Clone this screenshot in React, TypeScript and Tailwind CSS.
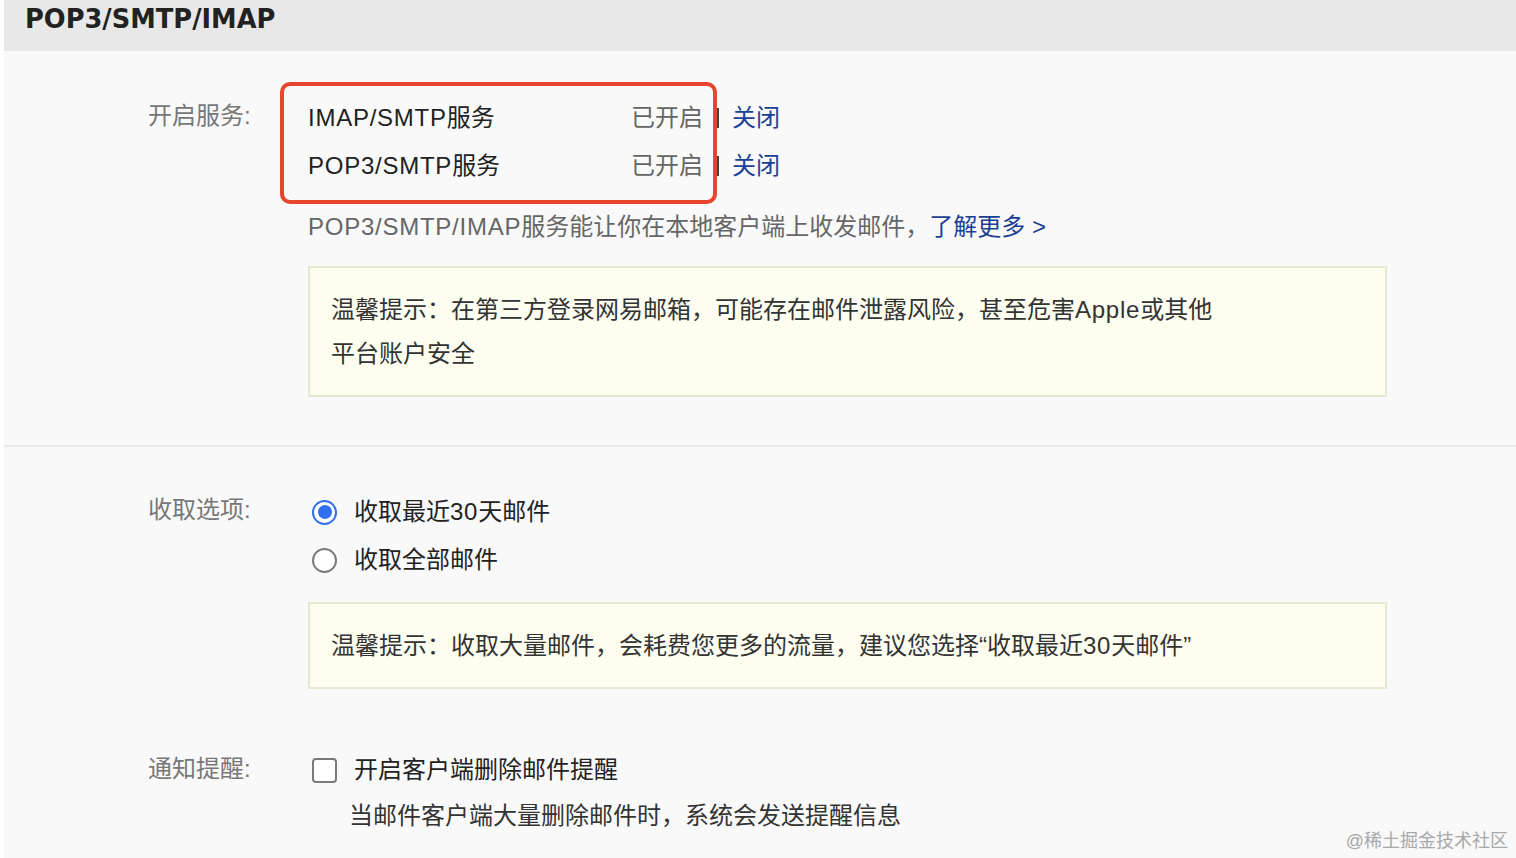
import React from "react";

const FONT = '"Liberation Sans", "Noto Sans CJK SC", sans-serif';

function L({ children }: { children: React.ReactNode }) {
  return <span className="tracking-[0.75px]">{children}</span>;
}

function Radio({ checked }: { checked: boolean }) {
  return checked ? (
    <div className="w-[25px] h-[25px] rounded-full border-[2.5px] border-[#2f6ff0] bg-white flex items-center justify-center">
      <div className="w-[14px] h-[14px] rounded-full bg-[#2f6ff0]" />
    </div>
  ) : (
    <div className="w-[25px] h-[25px] rounded-full border-2 border-[#7a7a7a] bg-white" />
  );
}

function ServiceRow({ name }: { name: string }) {
  return (
    <div className="flex items-center h-[48px]">
      <div className="w-[395px] flex justify-between text-[24px]">
        <span className="text-[#222]">
          <L>{name}</L>服务
        </span>
        <span className="text-[#666]">已开启</span>
      </div>
      <div className="w-[3px] h-[20px] bg-[#444] ml-[13px] mr-[13px]" />
      <span className="text-[24px] text-[#1c3f95]">关闭</span>
    </div>
  );
}

export default function App() {
  return (
    <div className="w-[1516px] h-[858px] bg-white pl-[4px] overflow-hidden" style={{ fontFamily: FONT }}>
      <div className="relative h-full bg-[#f9f9f9]">
        <div className="h-[51px] bg-[#e8e8e8] pl-[21px] pt-[4px]">
          <span
            className="text-[25.7px] leading-[30px] font-bold text-[#222]"
            style={{ fontFamily: '"DejaVu Sans", sans-serif' }}
          >
            POP3/SMTP/IMAP
          </span>
        </div>

        {/* Section 1 */}
        <div className="relative h-[394px] pt-[43px] pl-[144px] flex">
          <div className="w-[160px] h-[44px] flex items-center text-[24px] text-[#777]">开启服务:</div>
          <div className="flex flex-col">
            <ServiceRow name="IMAP/SMTP" />
            <ServiceRow name="POP3/SMTP" />
            <div className="mt-[13px] h-[48px] flex items-center text-[24px] text-[#666]">
              <span>
                <L>POP3/SMTP/IMAP</L>服务能让你在本地客户端上收发邮件，
              </span>
              <span className="text-[#1c3f95]">了解更多 &gt;</span>
            </div>
            <div className="mt-[15px] w-[1079px] h-[131px] bg-[#fdfdf0] border-2 border-[#e6e8d2] pl-[21px] pt-[20px] text-[24px] leading-[44px] text-[#333]">
              <div>
                温馨提示：在第三方登录网易邮箱，可能存在邮件泄露风险，甚至危害<L>Apple</L>或其他
              </div>
              <div>平台账户安全</div>
            </div>
          </div>
          <div className="absolute left-[276px] top-[31px] w-[437px] h-[122px] border-[4px] border-[#e8452d] rounded-[10px] pointer-events-none" />
        </div>

        <div className="h-[2px] bg-[#e9e9e9]" />

        {/* Section 2 */}
        <div className="pt-[41px] pl-[144px] flex">
          <div className="w-[160px] h-[44px] flex items-center text-[24px] text-[#777]">收取选项:</div>
          <div className="flex flex-col">
            <div className="h-[48px] flex items-center pl-[4px]">
              <Radio checked />
              <span className="ml-[17px] text-[24px] text-[#222]">
                收取最近<L>30</L>天邮件
              </span>
            </div>
            <div className="h-[48px] flex items-center pl-[4px]">
              <Radio checked={false} />
              <span className="ml-[17px] text-[24px] text-[#222]">收取全部邮件</span>
            </div>
            <div className="mt-[18px] w-[1079px] h-[87px] bg-[#fdfdf0] border-2 border-[#e6e8d2] pl-[21px] flex items-center text-[24px] text-[#333]">
              <span>
                温馨提示：收取大量邮件，会耗费您更多的流量，建议您选择“收取最近<L>30</L>天邮件”
              </span>
            </div>
          </div>
        </div>

        {/* Section 3 */}
        <div className="pt-[57px] pl-[144px] flex">
          <div className="w-[160px] h-[46px] flex items-center text-[24px] text-[#777]">通知提醒:</div>
          <div className="flex flex-col">
            <div className="h-[48px] flex items-center pl-[4px]">
              <div className="w-[25px] h-[25px] rounded-[4px] border-2 border-[#7a7a7a] bg-white" />
              <span className="ml-[17px] text-[24px] text-[#222]">开启客户端删除邮件提醒</span>
            </div>
            <div className="h-[44px] flex items-center pl-[41px] text-[24px] text-[#333]">
              当邮件客户端大量删除邮件时，系统会发送提醒信息
            </div>
          </div>
        </div>

        <div className="absolute right-[8px] bottom-[4px] text-[18px] leading-[26px] text-[#a8a8a8]">
          @稀土掘金技术社区
        </div>
      </div>
    </div>
  );
}
